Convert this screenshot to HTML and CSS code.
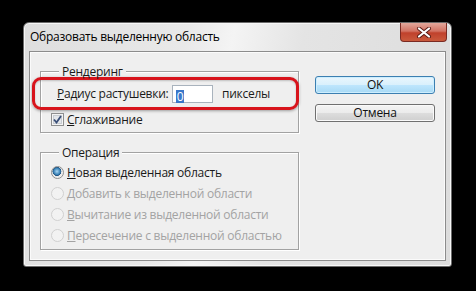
FILE: index.html
```html
<!DOCTYPE html>
<html lang="ru">
<head>
    <meta charset="UTF-8">
    <title>Образовать выделенную область</title>
    <link rel="stylesheet" href="styles.css">
</head>
<body>
<!-- окно диалога -->
<div class="win">
    <div class="titlebar">
        <span class="title">Образовать выделенную область</span>
        <span class="close">
            <svg width="16" height="11" viewBox="0 0 16 11">
                <path d="M3 1.5 L13 9.5 M13 1.5 L3 9.5" stroke="#5a1a14" stroke-width="4" stroke-linecap="round"/>
                <path d="M3 1.5 L13 9.5 M13 1.5 L3 9.5" stroke="#fff" stroke-width="2.2" stroke-linecap="round"/>
            </svg>
        </span>
    </div>

    <div class="client">
        <div class="left">
            <!-- Рендеринг -->
            <div class="group g1">
                <div class="gtitle">Рендеринг</div>
                <div class="mark">
                    <span class="lbl"><u>Р</u>адиус растушевки:</span>
                    <span class="inp"><span class="sel">0</span></span>
                    <span>пикселы</span>
                </div>
                <div class="row">
                    <svg class="chk" width="13" height="13" viewBox="0 0 13 13">
                        <rect x="0.5" y="0.5" width="12" height="12" fill="#f4f4f4" stroke="#8e8f8f"/>
                        <rect x="2.5" y="2.5" width="8" height="8" fill="#e3e6ea" stroke="#c8ccd1"/>
                        <path d="M3 6.5 L5.5 9.5 L10 3" fill="none" stroke="#3a4f78" stroke-width="1.8"/>
                    </svg>
                    <span><u>С</u>глаживание</span>
                </div>
            </div>

            <!-- Операция -->
            <div class="group g2">
                <div class="gtitle">Операция</div>
                <div class="row">
                    <span class="radio on"></span>
                    <span><u>Н</u>овая выделенная область</span>
                </div>
                <div class="row off">
                    <span class="radio"></span>
                    <span><u>Д</u>обавить к выделенной области</span>
                </div>
                <div class="row off">
                    <span class="radio"></span>
                    <span><u>В</u>ычитание из выделенной области</span>
                </div>
                <div class="row off">
                    <span class="radio"></span>
                    <span><u>П</u>ересечение с выделенной областью</span>
                </div>
            </div>
        </div>

        <div class="btns">
            <div class="btn def">OK</div>
            <div class="btn">Отмена</div>
        </div>
    </div>
</div>
</body>
</html>
```

FILE: styles.css
```css
body{
    margin: 0;
    padding: 22px 0 0 23px;
    background-color: #000;
    font-family: "Open Sans", "Noto Sans", sans-serif;
    font-size: 12px;
    letter-spacing: -0.25px;
    color: #1a1a1a;
}

/* окно */
.win{
    box-sizing: border-box;
    width: 429px;
    height: 245px;
    border: 1px solid #6b6b6b;
    border-radius: 6px 6px 3px 3px;
    background: linear-gradient(100deg, #dedede 0%, #e9e9e9 35%, #f4f4f4 45%, #e4e4e4 60%, #dcdcdc 100%);
    box-shadow: inset 0 0 0 1px #f7f7f7;
}

/* заголовок */
.titlebar{
    display: flex;
    justify-content: space-between;
    align-items: flex-start;
    height: 28px;
    padding-left: 6px;
}
.title{
    margin-top: 5px;
    color: #000;
}
.close{
    display: flex;
    align-items: center;
    justify-content: center;
    width: 47px;
    height: 19px;
    margin-right: 4px;
    border: 1px solid #7a2a22;
    border-top: 0;
    border-radius: 0 0 4px 4px;
    background: linear-gradient(#e2a79b 0%, #d27363 45%, #c0412c 55%, #c95a3d 100%);
    box-sizing: border-box;
}

/* рабочая область */
.client{
    display: flex;
    box-sizing: border-box;
    height: 210px;
    margin: 0 5px;
    padding: 19px 10px 0 10px;
    border: 1px solid #8c8c8c;
    background-color: #efefef;
    box-shadow: inset 0 0 0 1px #fbfbfb;
}
.left{
    width: 259px;
}

/* группы */
.group{
    box-sizing: border-box;
    border: 1px solid #a2a2a2;
    box-shadow: 1px 1px 0 #fff, inset 1px 1px 0 #fff;
}
.g1{
    height: 62px;
}
.g2{
    height: 98px;
    margin-top: 19px;
}
.gtitle{
    display: table;
    margin: -8px 0 0 18px;
    padding: 0 3px;
    line-height: 15px;
    background-color: #efefef;
}

/* красная рамка */
.mark{
    display: flex;
    align-items: center;
    height: 27px;
    margin: -2px -1px 0 -9px;
    padding-left: 22px;
    border: 3px solid #d8141c;
    border-radius: 9px;
    box-shadow: 0 1px 3px rgba(0,0,0,.35), inset 0 1px 2px rgba(0,0,0,.2);
}
.lbl{
    flex-shrink: 0;
    width: 115px;
    white-space: nowrap;
}
.inp{
    box-sizing: border-box;
    flex-shrink: 0;
    width: 41px;
    height: 18px;
    margin-right: 9px;
    padding: 2px 0 0 3px;
    border: 1px solid #a9b3bd;
    background-color: #fff;
}
.sel{
    display: inline-block;
    width: 8px;
    height: 13px;
    line-height: 13px;
    text-align: center;
    color: #fff;
    background-color: #3a77c9;
}

/* строки */
.row{
    display: flex;
    align-items: center;
    height: 21px;
    padding-left: 10px;
    white-space: nowrap;
}
.g1 .row{
    height: 17px;
    margin-top: 1px;
}
.g2 .gtitle{
    margin-bottom: 2px;
}
.chk{
    margin-right: 3px;
}
.radio{
    box-sizing: border-box;
    width: 13px;
    height: 13px;
    margin-right: 3px;
    border: 1px solid #8e8f8f;
    border-radius: 50%;
    background: radial-gradient(circle at 50% 50%, #e6e6e6 0, #f8f8f8 70%);
}
.radio.on{
    background: radial-gradient(circle at 45% 40%, #a9d6f2 0, #3c84b8 35%, #1d4f7d 48%, #e8e8e8 52%, #f6f6f6 100%);
}
.off{
    color: #a3a3a3;
}
.off .radio{
    border-color: #d0d0d0;
    background: #f2f2f2;
}

/* кнопки */
.btns{
    display: flex;
    flex-direction: column;
    gap: 10px;
    margin-left: 16px;
    padding-top: 5px;
}
.btn{
    box-sizing: border-box;
    width: 120px;
    height: 18px;
    line-height: 16px;
    text-align: center;
    border: 1px solid #707070;
    border-radius: 3px;
    background: linear-gradient(#f4f4f4 0%, #ebebeb 50%, #dddddd 51%, #cfcfcf 100%);
    box-shadow: inset 0 0 0 1px #fafafa;
    color: #111;
}
.btn.def{
    border-color: #3c7fb1;
    background: linear-gradient(#eaf6fd 0%, #d9f0fc 50%, #bee6fd 51%, #a7d9f5 100%);
    box-shadow: inset 0 0 0 1px #cdeefe;
}
```
